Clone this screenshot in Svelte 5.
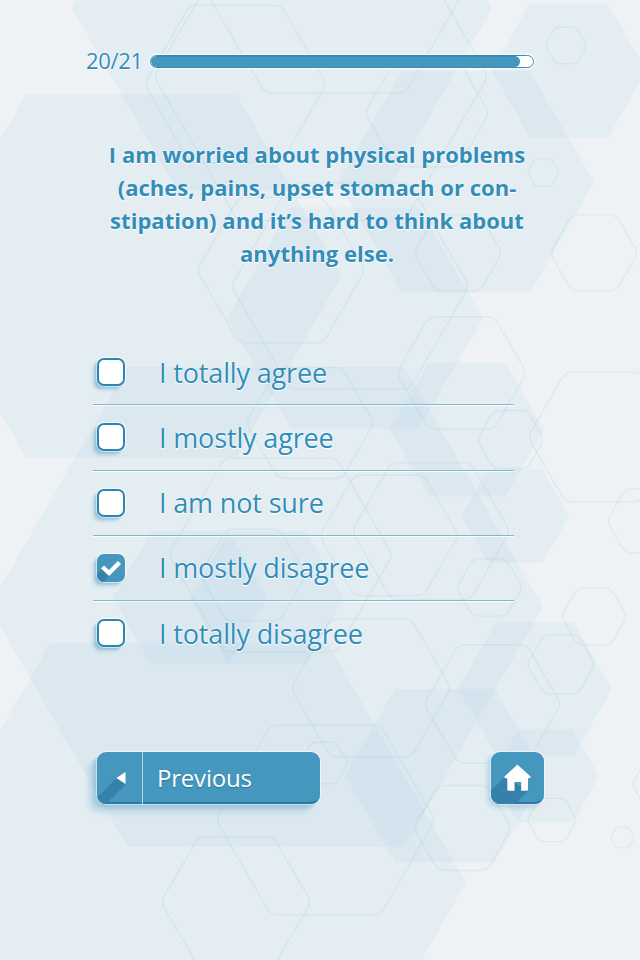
<script lang="ts">
  const total = 21
  let current = 20
  let selected = 3

  const question = [
    'I am worried about physical problems',
    '(aches, pains, upset stomach or con-',
    'stipation) and it’s hard to think about',
    'anything else.'
  ]

  const answers = [
    'I totally agree',
    'I mostly agree',
    'I am not sure',
    'I mostly disagree',
    'I totally disagree'
  ]

  // background hexagons: center x, center y, radius
  const filled = [
    [282, 8.5, 210],
    [131.5, 276, 210],
    [569, 70.5, 77.5],
    [466, 182, 128],
    [355, 318, 128],
    [266, 607, 277],
    [467, 429.5, 77],
    [515.5, 516, 54],
    [190, 598, 77],
    [267, 598, 77],
    [189, 883, 277],
    [445, 775.5, 100],
    [535, 689, 77],
    [545.5, 776, 54]
  ]

  const outlined = [
    [335, -28, 140],
    [235.5, 84, 91],
    [321, 76, 167],
    [427, 113, 62],
    [281, 270, 84],
    [350, 286, 119],
    [458, 253, 44],
    [594, 253, 44],
    [566, 45.5, 21],
    [543.5, 172.5, 16],
    [461.5, 373, 65],
    [603, 437, 75],
    [510.5, 439.5, 33.5],
    [310, 423, 64],
    [280.5, 555, 112],
    [431, 531, 79],
    [389, 535.5, 69.5],
    [489.5, 587.5, 33],
    [644, 521, 37],
    [594, 616.5, 33],
    [561, 664.5, 34],
    [492.5, 704, 68.5],
    [371, 688, 80],
    [325.5, 820, 109.5],
    [236, 902, 75],
    [324, 763, 24],
    [462.5, 828, 49],
    [552, 820, 25],
    [622.5, 837.5, 12],
    [654, 784, 22],
    [253, 575, 53]
  ]

  const corners = (cx: number, cy: number, r: number) =>
    [0, 1, 2, 3, 4, 5].map((i) => {
      const a = (i * Math.PI) / 3
      return [cx + r * Math.cos(a), cy + r * Math.sin(a)]
    })

  const points = ([cx, cy, r]: number[]) =>
    corners(cx, cy, r)
      .map((p) => p.join(','))
      .join(' ')

  const roundedPath = ([cx, cy, r]: number[]) => {
    const pts = corners(cx, cy, r)
    const t = Math.min(0.18, 7 / r)
    const mix = (a: number[], b: number[]) => `${a[0] + (b[0] - a[0]) * t} ${a[1] + (b[1] - a[1]) * t}`
    return (
      pts
        .map((p, i) => {
          const prev = pts[(i + 5) % 6]
          const next = pts[(i + 1) % 6]
          return `${i ? 'L' : 'M'}${mix(p, prev)}Q${p[0]} ${p[1]} ${mix(p, next)}`
        })
        .join('') + 'Z'
    )
  }
</script>

<main>
  <svg class="backdrop" viewBox="0 0 640 960" aria-hidden="true">
    {#each filled as hex}
      <polygon points={points(hex)} />
    {/each}
    {#each outlined as hex}
      <path d={roundedPath(hex)} />
    {/each}
  </svg>

  <header>
    <span class="count">{current}/{total}</span>
    <div class="track">
      <div class="bar" style="width: {(current / total) * 100 + 1.4}%"></div>
    </div>
  </header>

  <h1>
    {#each question as line}
      <span>{line}</span>
    {/each}
  </h1>

  <ul>
    {#each answers as answer, i}
      <li>
        <button class="answer" on:click={() => (selected = i)}>
          <span class="box" class:checked={selected === i}>
            {#if selected === i}
              <svg viewBox="0 0 28 28">
                <path class="shade" d="M5.5 14.5 12.5 21.5 6 28H0V20z" />
                <path class="tick" d="M5.5 13 12 19 22.500 8.500" />
              </svg>
            {/if}
          </span>
          <span class="label">{answer}</span>
        </button>
      </li>
    {/each}
  </ul>

  <footer>
    <button class="previous" on:click={() => (current = Math.max(1, current - 1))}>
      <span class="arrow">
        <svg viewBox="0 0 46 52">
          <path class="shade" d="M19 26.5 29 32 9 52H0V45.5z" />
          <path class="glyph" d="M19.5 26 28.5 20V32z" />
        </svg>
      </span>
      <span class="text">Previous</span>
    </button>
    <button class="home" aria-label="Home">
      <svg viewBox="0 0 53 52">
        <path class="shade" d="M13.5 25.5 37.5 38.5 24 52H0V38.5z" />
        <path
          class="glyph"
          d="M26.5 12.8 39.3 24.3Q40 26 38.3 26.3H37V37.5Q37 38.7 35.8 38.7H30.2V30H23.5V38.7H17.5Q16.3 38.7 16.3 37.5V26.3H14.8Q13 26 13.7 24.3L25.5 13.5Z"
        />
      </svg>
    </button>
  </footer>
</main>

<style>
  :global(body) {
    margin: 0;
  }

  main {
    position: relative;
    box-sizing: border-box;
    width: 640px;
    height: 960px;
    padding: 45px 96px 0 86px;
    overflow: hidden;
    display: flex;
    flex-direction: column;
    background: #eef2f5;
    color: #328eb8;
    font-family: 'Open Sans', 'Noto Sans', sans-serif;
  }

  .backdrop {
    position: absolute;
    top: 0;
    left: 0;
    width: 640px;
    height: 960px;
  }

  .backdrop polygon {
    fill: rgba(122, 187, 221, 0.085);
  }

  .backdrop path {
    fill: none;
    stroke: rgba(125, 185, 200, 0.15);
    stroke-width: 1.4;
  }

  header,
  h1,
  ul,
  footer {
    position: relative;
  }

  header {
    display: flex;
    align-items: center;
    height: 32px;
  }

  .count {
    width: 64px;
    margin-top: -2px;
    font-size: 22px;
    letter-spacing: -0.3px;
    white-space: nowrap;
    text-shadow: 0 0 2px #fff, 0 1px 1px #fff;
  }

  .track {
    box-sizing: border-box;
    width: 384px;
    height: 13px;
    border: 1px solid #328eb8;
    border-radius: 7px;
    overflow: hidden;
    background: #fff;
    box-shadow: 0 0 2px 1px #fff;
  }

  .bar {
    box-sizing: border-box;
    height: 100%;
    border-radius: 6px;
    border-top: 1px solid #328eb8;
    background: #4697bd;
  }

  h1 {
    display: flex;
    flex-direction: column;
    align-items: center;
    margin: 61px 0 0 4px;
    font-size: 22px;
    font-weight: 700;
    letter-spacing: 0.03px;
    line-height: 33px;
    white-space: nowrap;
    text-shadow: 0 0 2px #fff, 0 1px 1px #fff;
  }

  ul {
    width: 421px;
    margin: 70px 0 0 7px;
    padding: 0;
    list-style: none;
  }

  li {
    box-sizing: border-box;
    height: 65.25px;
    border-bottom: 1px solid #80b8d2;
    box-shadow: 0 1px 0 rgba(255, 255, 255, 0.8);
  }

  li:last-child {
    border: none;
    box-shadow: none;
  }

  button {
    padding: 0;
    border: none;
    background: none;
    color: inherit;
    font-family: inherit;
    text-align: left;
    cursor: pointer;
  }

  .answer {
    display: flex;
    align-items: center;
    width: 100%;
    height: 64px;
    padding-left: 4px;
  }

  .box {
    box-sizing: border-box;
    width: 28px;
    height: 28px;
    border: 2px solid #2b87b1;
    border-radius: 7px;
    background: #fff;
    box-shadow:
      0 0 1px 1px rgba(255, 255, 255, 0.7),
      -1px 1px 1px rgba(50, 142, 184, 0.3),
      -2px 2px 2px rgba(50, 142, 184, 0.2),
      -3px 3px 2px rgba(50, 142, 184, 0.12),
      -4px 4px 3px rgba(50, 142, 184, 0.1),
      -5px 5px 3px rgba(50, 142, 184, 0.08);
  }

  .box.checked {
    border: none;
    overflow: hidden;
    background: #4697bd;
  }

  .box svg {
    display: block;
    width: 28px;
    height: 28px;
  }

  .tick {
    fill: none;
    stroke: #fff;
    stroke-width: 4.4;
  }

  .shade {
    fill: #3581ab;
  }

  .glyph {
    fill: #fff;
  }

  .label {
    margin-left: 34px;
    font-size: 27px;
    letter-spacing: -0.15px;
    white-space: nowrap;
    text-shadow: 0 0 2px #fff, 0 1px 1px #fff;
  }

  footer {
    display: flex;
    justify-content: space-between;
    margin: 86px 0 0 11px;
  }

  .previous,
  .home {
    display: flex;
    height: 52px;
    border-radius: 9px;
    overflow: hidden;
    background: #4697bd;
    color: #fff;
    box-shadow:
      inset 0 -3px 0 -1px #2a78a5,
      0 0 1px 1px rgba(255, 255, 255, 0.6),
      -1px 1px 1px rgba(50, 142, 184, 0.2),
      -3px 3px 3px rgba(50, 142, 184, 0.14),
      -5px 5px 3px rgba(50, 142, 184, 0.1),
      -7px 7px 4px rgba(50, 142, 184, 0.08),
      -9px 9px 5px rgba(50, 142, 184, 0.06),
      -11px 11px 5px rgba(50, 142, 184, 0.04);
  }

  .previous {
    width: 223px;
  }

  .home {
    box-shadow:
      inset 0 -3px 0 -1px #2a78a5,
      0 0 1px 1px rgba(255, 255, 255, 0.6),
      -1px 1px 2px rgba(50, 142, 184, 0.2),
      -3px 3px 4px rgba(50, 142, 184, 0.15),
      -4px 4px 5px rgba(50, 142, 184, 0.1);
  }

  .arrow {
    width: 45px;
    border-right: 1px solid #b5d6e5;
  }

  .arrow svg {
    display: block;
    width: 46px;
    height: 52px;
  }

  .text {
    padding-left: 14px;
    font-size: 24px;
    letter-spacing: -0.2px;
    line-height: 51px;
    text-shadow: 0 1px 1px #26719c;
  }

  .home {
    width: 53px;
  }

  .home svg {
    width: 53px;
    height: 52px;
  }
</style>
